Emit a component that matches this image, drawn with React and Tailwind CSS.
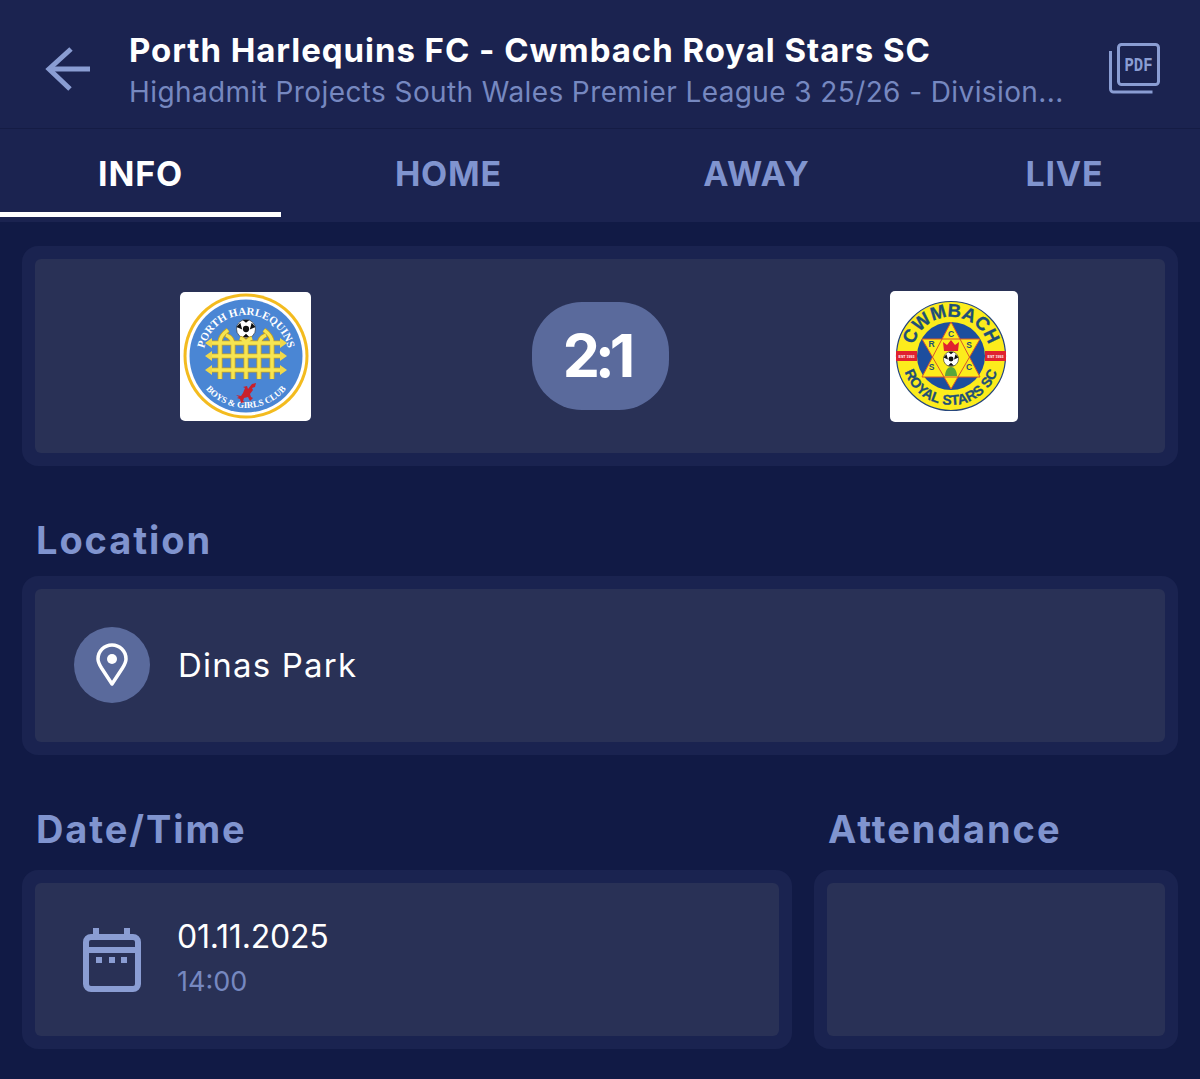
const FONT = "font-['Inter',sans-serif]";

const tabs = ["INFO", "HOME", "AWAY", "LIVE"];

function BackArrow() {
  return (
    <svg width="46" height="46" viewBox="0 0 46 46" fill="none" stroke="#8a9dd3" strokeWidth="5">
      <path d="M45 23H4" />
      <path d="M26 3 4 23l21 20" />
    </svg>
  );
}

function PdfIcon() {
  return (
    <svg width="52" height="52" viewBox="0 0 52 52" fill="none">
      <rect x="9.500" y="1.500" width="40" height="40" rx="3" stroke="#8a9dd3" strokeWidth="3" />
      <path d="M1.500 8v38a3 3 0 0 0 3 3h39" stroke="#8a9dd3" strokeWidth="3" />
      <text x="29.500" y="28" textAnchor="middle" fill="#8a9dd3" fontFamily="Liberation Mono" fontWeight="700" fontSize="20" textLength="28" lengthAdjust="spacingAndGlyphs">PDF</text>
    </svg>
  );
}

function PinIcon() {
  return (
    <svg width="32" height="44" viewBox="0 0 32 44" fill="none">
      <path d="M16 41 5.500 25C3 21 2 19 2 16a14 14 0 0 1 28 0c0 3-1 5-3.500 9Z" stroke="#fff" strokeWidth="3.500" strokeLinejoin="round" />
      <circle cx="16" cy="16" r="5" fill="#fff" />
    </svg>
  );
}

function CalendarIcon() {
  return (
    <svg width="58" height="64" viewBox="0 0 58 64" fill="none">
      <rect x="10" y="0" width="6" height="10" fill="#8a9dd3" />
      <rect x="41" y="0" width="6" height="10" fill="#8a9dd3" />
      <rect x="3" y="9" width="52" height="52" rx="5" stroke="#8a9dd3" strokeWidth="6" />
      <rect x="3" y="19" width="52" height="6" fill="#8a9dd3" />
      <rect x="13" y="29" width="6" height="6" fill="#8a9dd3" />
      <rect x="26" y="29" width="6" height="6" fill="#8a9dd3" />
      <rect x="38" y="29" width="6" height="6" fill="#8a9dd3" />
    </svg>
  );
}

function Ball({ cx, cy, r }) {
  return (
    <g>
      <circle cx={cx} cy={cy} r={r} fill="#fff" stroke="#222" strokeWidth="0.6" />
      <circle cx={cx} cy={cy} r={r * 0.33} fill="#111" />
      <path d={`M${cx - r} ${cy - r * 0.2}l${r * 0.4} -${r * 0.45} ${r * 0.2} ${r * 0.7}Z M${cx + r} ${cy - r * 0.2}l-${r * 0.4} -${r * 0.45} -${r * 0.2} ${r * 0.7}Z M${cx - r * 0.4} ${cy + r * 0.9}l${r * 0.8} 0 -${r * 0.4} -${r * 0.4}Z M${cx - r * 0.35} ${cy - r * 0.95}l${r * 0.7} 0 -${r * 0.35} ${r * 0.3}Z`} fill="#111" />
    </g>
  );
}

const fence =
  "M31 51H101M31 64H101M31 78H101M40 87V50Q40 44 48 38M53 87V53Q53 46 46 43M66 87V53Q66 48 60 46M66 53Q66 48 72 46M79 87V53Q79 46 86 43M92 87V50Q92 44 84 38";

function PorthLogo() {
  return (
    <svg width="131" height="129" viewBox="0 0 131 129" className="rounded-[5px] bg-white">
      <circle cx="66" cy="64" r="62.500" fill="#f3bb1f" />
      <circle cx="66" cy="64" r="59.500" fill="#fff" />
      <circle cx="66" cy="64" r="56.500" fill="#4a86d4" />
      <defs>
        <path id="porthTop" d="M23 66a43 43 0 0 1 86 0" />
        <path id="porthBottom" d="M14 64a52 52 0 0 0 104 0" />
      </defs>
      <text fill="#fff" fontFamily="Liberation Serif" fontWeight="700" fontSize="11">
        <textPath href="#porthTop" startOffset="50%" textAnchor="middle">PORTH HARLEQUINS</textPath>
      </text>
      <text fill="#fff" fontFamily="Liberation Serif" fontWeight="700" fontSize="9">
        <textPath href="#porthBottom" startOffset="50%" textAnchor="middle">BOYS &amp; GIRLS CLUB</textPath>
      </text>
      <Ball cx={66} cy={37} r={9.500} />
      <path d={fence} stroke="#c9a21c" strokeWidth="5" fill="none" />
      <path d={fence} stroke="#f6e552" strokeWidth="3.400" fill="none" />
      <path d="M32 46 25 51l7 5ZM32 59 25 64l7 5ZM32 73 25 78l7 5ZM100 46l7 5-7 5ZM100 59l7 5-7 5ZM100 73l7 5-7 5Z" fill="#f0d84a" />
      <path d="M56 103l5 1 2-3 2-5-2-1 4-1 1 3 4-5 4-1-1 4-3 1 1 2-3 4 1 3 2 1-3 3-2-4-4 1-1 3 2 1-4 1-1-4-3-1 2-1Z" fill="#c8202b" />
    </svg>
  );
}

function CwmbachLogo() {
  return (
    <svg width="128" height="131" viewBox="0 0 128 131" className="rounded-[5px] bg-white">
      <circle cx="61" cy="65" r="54.500" fill="#fcec1c" stroke="#27477c" strokeWidth="1.200" />
      <circle cx="61" cy="65" r="34" fill="#1d4e9e" />
      <rect x="6" y="60" width="21" height="10" fill="#e0222f" />
      <rect x="95" y="60" width="21" height="10" fill="#e0222f" />
      <text x="16.500" y="66.500" textAnchor="middle" fill="#fff" fontFamily="Liberation Sans" fontWeight="700" fontSize="3.600">EST 1993</text>
      <text x="105.500" y="66.500" textAnchor="middle" fill="#fff" fontFamily="Liberation Sans" fontWeight="700" fontSize="3.600">EST 1993</text>
      <defs>
        <path id="cwmTop" d="M22 65a39 39 0 0 1 78 0" />
        <path id="cwmBottom" d="M12 65a49 49 0 0 0 98 0" />
      </defs>
      <text fill="#1e4f78" stroke="#1e4f78" strokeWidth="0.3" fontFamily="Liberation Sans" fontWeight="700" fontSize="18.500">
        <textPath href="#cwmTop" startOffset="50%" textAnchor="middle">CWMBACH</textPath>
      </text>
      <text fill="#1e4f78" stroke="#1e4f78" strokeWidth="0.3" fontFamily="Liberation Sans" fontWeight="700" fontSize="14">
        <textPath href="#cwmBottom" startOffset="50%" textAnchor="middle">ROYAL STARS SC</textPath>
      </text>
      <path d="M61 31 90 86H32ZM61 98 32 48H90Z" fill="#fcec1c" />
      <path d="M61 31 90 86H32ZM61 98 32 48H90Z" fill="none" stroke="#d8552a" strokeWidth="1" strokeLinejoin="round" />
      <g fill="#1e4f78" fontFamily="Liberation Sans" fontWeight="700" fontSize="8.500" textAnchor="middle">
        <text x="61" y="46">C</text>
        <text x="41.500" y="56">R</text>
        <text x="79" y="57">S</text>
        <text x="41.500" y="79">S</text>
        <text x="79" y="79">C</text>
      </g>
      <path d="M54 60 53 51l4 3 4-5 4 5 4-3-1 9Z" fill="#e0222f" />
      <Ball cx={61} cy={68} r={7.500} />
      <path d="M61 76c4 0 6 5 6 9H55c0-4 2-9 6-9Z" fill="#5aa63a" />
    </svg>
  );
}

function Card({ children, className = "" }) {
  return (
    <div className={`rounded-[16px] bg-[#1a2350] p-[13px] ${className}`}>
      <div className="h-full rounded-[6px] bg-[#293156]">{children}</div>
    </div>
  );
}

function SectionTitle({ children, className = "" }) {
  return (
    <h2 className={`pl-[14px] pt-[54px] text-[38px] leading-[40px] font-bold tracking-[1.9px] whitespace-nowrap text-[#8094cf] ${className}`}>
      {children}
    </h2>
  );
}

export default function App() {
  return (
    <div className={`h-[1079px] w-[1200px] overflow-hidden bg-[#111a45] ${FONT}`}>
      <header className="flex h-[129px] items-center border-b border-[#151c45] bg-[#1b2350] pt-[10px]">
        <div className="flex w-[129px] pl-[45px]">
          <BackArrow />
        </div>
        <div className="w-[980px] pt-[3px]">
          <h1 className="text-[33px] leading-[40px] font-bold tracking-[0.95px] whitespace-nowrap text-white">
            Porth Harlequins FC - Cwmbach Royal Stars SC
          </h1>
          <p className="mt-[2px] text-[28px] leading-[40px] tracking-[0.4px] whitespace-nowrap text-[#7688c0]">
            Highadmit Projects South Wales Premier League 3 25/26 - Division...
          </p>
        </div>
        <PdfIcon />
      </header>

      <nav className="flex h-[93px] gap-[27px] overflow-hidden bg-[#1b2350]">
        {tabs.map((tab, i) => (
          <div key={tab} className="flex w-[281px] shrink-0 flex-col">
            <div className={`flex h-[83px] items-center justify-center pt-[6px] text-[34px] font-bold tracking-[0.8px] ${i === 0 ? "text-white" : "text-[#8094cf]"}`}>
              {tab}
            </div>
            {i === 0 && <div className="h-[5px] bg-white" />}
          </div>
        ))}
      </nav>

      <main className="px-[22px] pt-[24px]">
        <Card className="h-[220px]">
          <div className="flex h-full items-center gap-[221px] pl-[145px]">
            <PorthLogo />
            <div className="flex h-[108px] w-[137px] items-center justify-center rounded-[50px] bg-[#5a6a9c] pr-[8px] text-[59px] font-bold tracking-[-5px] text-white">
              2:1
            </div>
            <CwmbachLogo />
          </div>
        </Card>

        <SectionTitle className="pb-[16px]">Location</SectionTitle>
        <Card className="h-[179px]">
          <div className="flex h-full items-center gap-[28px] pl-[39px]">
            <div className="mb-[2px] flex size-[76px] items-center justify-center rounded-full bg-[#5a6a9c]">
              <PinIcon />
            </div>
            <span className="text-[33px] tracking-[1.2px] text-white">Dinas Park</span>
          </div>
        </Card>

        <div className="grid grid-cols-[770px_364px] gap-x-[22px]">
          <SectionTitle className="pb-[21px]">Date/Time</SectionTitle>
          <SectionTitle className="pb-[21px]">Attendance</SectionTitle>
          <Card className="h-[179px]">
            <div className="flex h-full items-center gap-[36px] pl-[48px]">
              <CalendarIcon />
              <div>
                <div className="text-[32px] leading-[40px] tracking-[-0.2px] text-white">01.11.2025</div>
                <div className="mt-[5px] text-[27px] leading-[40px] text-[#7688c0]">14:00</div>
              </div>
            </div>
          </Card>
          <Card className="h-[179px]" />
        </div>
      </main>
    </div>
  );
}
